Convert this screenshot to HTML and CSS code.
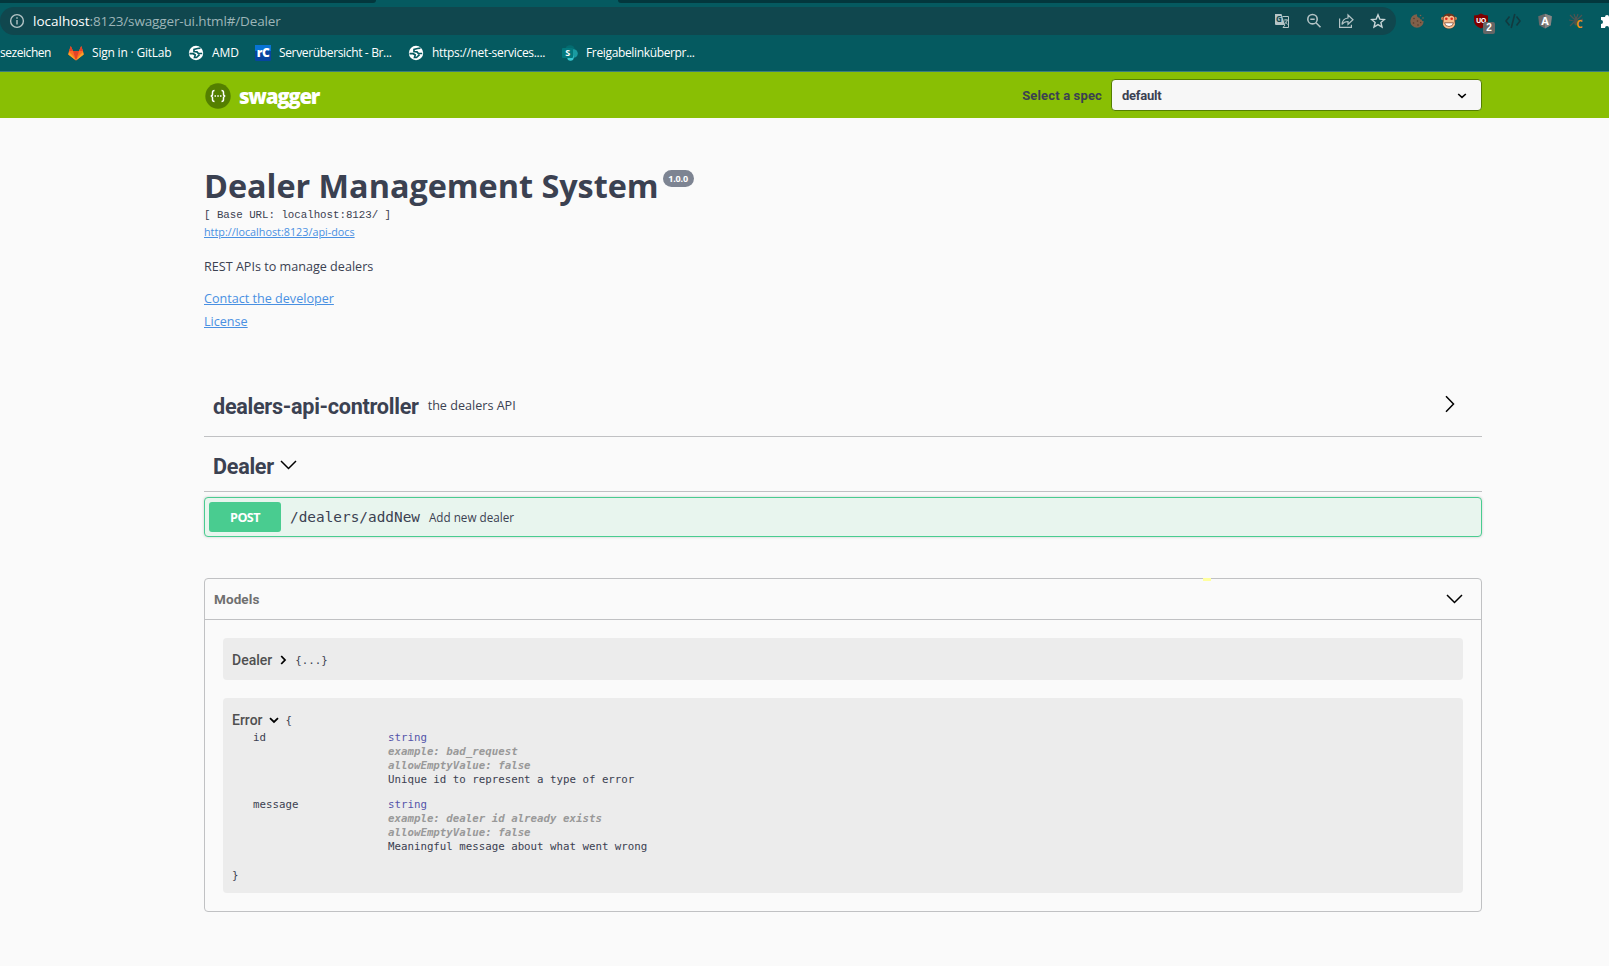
FILE: index.html
```html
<!DOCTYPE html>
<html lang="en">
<head>
    <meta charset="UTF-8">
    <meta name="viewport" content="width=device-width, initial-scale=1.0">
    <title>Swagger UI</title>
    <link rel="stylesheet" href="styles.css">
</head>
<body>
    <div class="browser">
        <div class="tabs">
            <div class="tab-left"></div>
            <div class="tab-right"></div>
        </div>
        <div class="toolbar">
            <div class="address-bar">
                <svg class="info-icon" width="16" height="16" viewBox="0 0 16 16" fill="none" stroke="#b4c4c6" stroke-width="1.4"><circle cx="8" cy="8" r="6.4"/><path d="M8 7v4.5M8 4.2v1.6"/></svg>
                <div class="url"><span class="host">localhost</span><span class="path">:8123/swagger-ui.html#/Dealer</span></div>
                <div class="address-icons">
                    <svg width="16" height="16" viewBox="0 0 16 16"><path d="M1 1h6.500l3.500 11H2q-1 0-1-1z" fill="#b6c6c8"/><path d="M8.500 3.500h6v11H9l2-2.500" fill="none" stroke="#b6c6c8"/><text x="5" y="9" class="g-letter">G</text><path d="M10 7h4M12 6v1M13.300 7q-.5 3-3 4M11 8.500l2.500 3" fill="none" stroke="#b6c6c8" stroke-width=".9"/></svg>
                    <svg width="16" height="16" viewBox="0 0 16 16" fill="none" stroke="#b4c4c6" stroke-width="1.6"><circle cx="6.500" cy="6.200" r="4.700"/><path d="M10 9.700l4.500 4.500M4.300 6.200h4.400"/></svg>
                    <svg width="16" height="16" viewBox="0 0 16 16" fill="none" stroke="#b4c4c6" stroke-width="1.2"><path d="M1.600 5.500v8.900h11.800v-2.600"/><path d="M4 11.500q.5-6 6-6.500V2l5 4.800-5 4.500V8.500q-4 0-6 3z"/></svg>
                    <svg width="16" height="16" viewBox="0 0 16 16" fill="none" stroke="#c8d5d7" stroke-width="1.4"><path d="M8 1.800l1.800 4.300 4.600.4-3.500 3 1.100 4.500-4-2.400L4 14l1.100-4.500-3.500-3 4.600-.4z"/></svg>
                </div>
            </div>
            <div class="extensions">
                <svg width="16" height="16" viewBox="0 0 16 16"><path d="M8 1.300A6.700 6.700 0 1 0 14.700 8q-2 .6-2-1.500-2.200.5-2-1.700Q7.500 4.500 8 1.300z" fill="#80604a"/><g fill="#553a29"><circle cx="5" cy="5.500" r=".8"/><circle cx="4.500" cy="10" r=".8"/><circle cx="8.500" cy="8" r=".8"/><circle cx="9" cy="12" r=".8"/><circle cx="11.700" cy="9.500" r=".7"/></g><circle cx="11.500" cy="2.500" r=".8" fill="#80604a"/><circle cx="14" cy="5" r=".8" fill="#80604a"/></svg>
                <svg width="16" height="16" viewBox="0 0 16 16"><circle cx="1.800" cy="5.500" r="1.800" fill="#c98355"/><circle cx="14.200" cy="5.500" r="1.800" fill="#c98355"/><rect x="1.700" y=".5" width="12.600" height="15" rx="5.500" fill="#70351d"/><path d="M2.600 4.500q2.700-3 5.400-.5 2.700-2.500 5.400.5V8l.6 3.500q-1.500 4-6 4t-6-4L2.600 8z" fill="#f6bd8d"/><circle cx="5.300" cy="5.700" r="1.300" fill="#e1251b"/><circle cx="10.700" cy="5.700" r="1.300" fill="#e1251b"/><path d="M3.500 9.800h9q-.5 3.700-4.500 3.700T3.500 9.800z" fill="#fff" stroke="#70351d" stroke-width=".7"/></svg>
                <div class="ublock">
                    <svg width="16" height="16" viewBox="0 0 16 16"><path d="M8 .5Q11 2.500 15 2.500v5Q15 13 8 15.500 1 13 1 7.500v-5Q5 2.500 8 .5z" fill="#800000"/><text x="8" y="9.500" class="ub-letter">UO</text></svg>
                    <span class="count">2</span>
                </div>
                <svg width="16" height="16" viewBox="0 0 16 16" fill="none" stroke="#123a3f" stroke-width="1.6"><path d="M4.500 3.500L1 8l3.500 4.500M11.500 3.500L15 8l-3.500 4.500M9.800 1L6.200 15"/></svg>
                <svg width="16" height="16" viewBox="0 0 16 16"><path d="M8 .8l6.800 2.400-1 9L8 15.500l-5.800-3.300-1-9z" fill="#696969"/><path d="M8 .8l6.800 2.400-1 9L8 15.500z" fill="#858585"/><text x="8" y="12" class="ng-letter">A</text></svg>
                <svg class="bug" width="16" height="16" viewBox="0 0 16 16"><ellipse cx="7" cy="8" rx="2" ry="4.500" fill="#4c5453"/><path d="M1 2l4 4M13 2L9 6M0 7l5 1M14 6L9 8M1 13l4-4M5 1l1 3M9 1L8 4" fill="none" stroke="#4c5453" stroke-width="1.2"/><text x="10.500" y="15" class="c-letter">C</text></svg>
                <svg class="puzzle" width="16" height="16" viewBox="0 0 16 16" fill="#fff"><path d="M1 4h4a2 2 0 1 1 4 0h4v11H9a2 2 0 0 0-4 0H1v-4a2 2 0 0 0 0-4z"/></svg>
            </div>
        </div>
        <div class="bookmarks">
            <div class="bookmark b-first"><span>sezeichen</span></div>
            <div class="bookmark b-gitlab">
                <svg width="16" height="16" viewBox="0 0 16 16"><path d="M8 15.500L.3 9.500 1 6l1.800-5L5 6h6l2.200-5L15 6l.7 3.500z" fill="#fc6d26"/><path d="M8 15.500L5 6h6z" fill="#e24329"/><path d="M2.800 1L5 6H1zM13.200 1L11 6h4z" fill="#e24329"/><path d="M8 15.500L.3 9.500 1 7l4 4zM8 15.500l7.700-6L15 7l-4 4z" fill="#fca326"/></svg>
                <span>Sign in · GitLab</span>
            </div>
            <div class="bookmark b-amd">
                <svg width="16" height="16" viewBox="0 0 16 16"><circle cx="8" cy="8" r="7.200" fill="#fff"/><path d="M1.500 8.700h3.700l2 1.200-.7 2.600h2l3-2.800M12.500 3.200L9.500 3.500 6 4.500v2l3 .3 1.200 1.500 4 .2" fill="none" stroke="#055a60" stroke-width="1.700"/></svg>
                <span>AMD</span>
            </div>
            <div class="bookmark b-server">
                <svg width="16" height="16" viewBox="0 0 16 16"><rect width="16" height="16" rx="1.500" fill="#0645a0"/><path d="M0 0h16v6H0z" fill="#0873d4"/><text x="8" y="12" class="rc-letter">rC</text></svg>
                <span>Serverübersicht - Br...</span>
            </div>
            <div class="bookmark b-net">
                <svg width="16" height="16" viewBox="0 0 16 16"><circle cx="8" cy="8" r="7.200" fill="#fff"/><path d="M1.500 8.700h3.700l2 1.200-.7 2.600h2l3-2.800M12.500 3.200L9.500 3.500 6 4.500v2l3 .3 1.200 1.500 4 .2" fill="none" stroke="#055a60" stroke-width="1.700"/></svg>
                <span>https://net-services....</span>
            </div>
            <div class="bookmark b-share">
                <svg width="16" height="16" viewBox="0 0 16 16"><circle cx="8" cy="5" r="4.800" fill="#036c70"/><circle cx="11.500" cy="8.500" r="4.300" fill="#1a9ba1"/><circle cx="8.500" cy="12.500" r="3.200" fill="#37c6d0"/><rect y="3" width="11" height="10" rx="1" fill="#03787c"/><text x="5.500" y="11.300" class="sp-letter">S</text></svg>
                <span>Freigabelinküberpr...</span>
            </div>
        </div>
    </div>

    <div class="topbar">
        <div class="wrapper">
            <div class="logo">
                <svg width="26" height="26" viewBox="0 0 26 26"><circle cx="13" cy="13" r="12.700" fill="#547f00"/><path d="M9.500 7.500q-2 0-2 2v1.500q0 2-1.800 2 1.800 0 1.800 2v1.500q0 2 2 2M16.500 7.500q2 0 2 2v1.500q0 2 1.800 2-1.800 0-1.800 2v1.500q0 2-2 2" fill="none" stroke="#fff" stroke-width="1.500"/><path d="M9.500 12.300H11v1.500H9.500zM12.300 12.300h1.500v1.500h-1.500zM15 12.300h1.500v1.500H15z" fill="#fff"/></svg>
                <span>swagger</span>
            </div>
            <div class="spec">
                <label>Select a spec</label>
                <div class="select">
                    <span>default</span>
                    <svg width="10" height="6" viewBox="0 0 10 6"><path d="M1.200 1L5 4.400 8.800 1" fill="none" stroke="#000" stroke-width="1.600"/></svg>
                </div>
            </div>
        </div>
    </div>

    <div class="wrapper main">
        <div class="info">
            <h1>Dealer Management System<span class="version">1.0.0</span></h1>
            <pre class="base-url">[ Base URL: localhost:8123/ ]</pre>
            <a class="docs-link" href="#">http://localhost:8123/api-docs</a>
            <p class="description">REST APIs to manage dealers</p>
            <a class="info-link" href="#">Contact the developer</a>
            <a class="info-link" href="#">License</a>
        </div>

        <div class="tag tag-controller">
            <h2>dealers-api-controller</h2>
            <small>the dealers API</small>
            <svg width="10" height="18" viewBox="0 0 10 18"><path d="M1 1.200L8.500 9 1 16.800" fill="none" stroke="#000" stroke-width="1.500"/></svg>
        </div>
        <div class="tag tag-dealer">
            <h2>Dealer</h2>
            <svg width="17" height="10" viewBox="0 0 17 10"><path d="M1 1l7.500 7.500L16 1" fill="none" stroke="#000" stroke-width="1.500"/></svg>
        </div>
        <div class="opblock">
            <span class="method">POST</span>
            <span class="op-path">/dealers/addNew</span>
            <span class="op-summary">Add new dealer</span>
        </div>

        <div class="models">
            <div class="models-header">
                <h4>Models</h4>
                <svg width="17" height="10" viewBox="0 0 17 10"><path d="M1 1l7.500 7.500L16 1" fill="none" stroke="#000" stroke-width="1.500"/></svg>
                <span class="mark"></span>
            </div>
            <div class="model-box">
                <div class="model-title">
                    <span class="name">Dealer</span>
                    <svg class="closed" width="7" height="10" viewBox="0 0 7 10"><path d="M1.200 1L5 5 1.200 9" fill="none" stroke="#000" stroke-width="1.800"/></svg>
                    <code>{...}</code>
                </div>
            </div>
            <div class="model-box model-error">
                <div class="model-title">
                    <span class="name">Error</span>
                    <svg class="opened" width="10" height="7" viewBox="0 0 10 7"><path d="M1 1.200L5 5l4-3.800" fill="none" stroke="#000" stroke-width="1.800"/></svg>
                    <code>{</code>
                </div>
                <div class="prop">
                    <div class="prop-name">id</div>
                    <div>
                        <div class="prop-type">string</div>
                        <div class="prop-attr">example: bad_request</div>
                        <div class="prop-attr">allowEmptyValue: false</div>
                        <div>Unique id to represent a type of error</div>
                    </div>
                </div>
                <div class="prop">
                    <div class="prop-name">message</div>
                    <div>
                        <div class="prop-type">string</div>
                        <div class="prop-attr">example: dealer id already exists</div>
                        <div class="prop-attr">allowEmptyValue: false</div>
                        <div>Meaningful message about what went wrong</div>
                    </div>
                </div>
                <div class="brace">}</div>
            </div>
        </div>
    </div>
</body>
</html>
```
FILE: styles.css
```css
* {
    box-sizing: border-box;
}
body {
    margin: 0;
    height: 966px;
    overflow: hidden;
    background: #fafafa;
    color: #3b4151;
    font-family: "Open Sans", sans-serif;
}
svg {
    display: block;
    flex-shrink: 0;
}
h1, h2, h4, p, pre {
    margin: 0;
}

/* browser */
.browser {
    height: 72px;
    background: #055a60;
    border-bottom: 1px solid #3a7f80;
    color: #fff;
    overflow: hidden;
}
.tabs {
    display: flex;
    justify-content: space-between;
    height: 3px;
}
.tab-left {
    width: 376px;
    background: #03373d;
    border-bottom-right-radius: 5px;
}
.tab-right {
    width: 991px;
    background: #03373d;
    border-bottom-left-radius: 5px;
}
.toolbar {
    display: flex;
    margin-top: 4px;
    height: 28px;
}
.address-bar {
    display: flex;
    align-items: center;
    flex-shrink: 0;
    width: 1396px;
    padding: 0 10px 0 9px;
    background: #10474e;
    border-radius: 14px;
}
.url {
    margin-left: 8px;
    padding-bottom: 1px;
    font-size: 13.5px;
    white-space: nowrap;
}
.url .path {
    color: #9db5b8;
    letter-spacing: -0.14px;
}
.address-icons {
    display: flex;
    gap: 16px;
    margin-left: auto;
}
.extensions {
    display: flex;
    align-items: center;
    gap: 16px;
    margin-left: 13px;
}
.bug {
    overflow: visible;
}
.puzzle {
    margin-left: -1px;
}
.ublock {
    position: relative;
}
.count {
    position: absolute;
    left: 10px;
    top: 9px;
    width: 12px;
    height: 12px;
    border-radius: 2px;
    background: #666;
    font: bold 10px/12px "Liberation Sans", sans-serif;
    text-align: center;
}
.g-letter, .ub-letter, .ng-letter, .c-letter, .rc-letter, .sp-letter {
    fill: #fff;
    font: bold 9px "Open Sans", sans-serif;
    text-anchor: middle;
}
.g-letter {
    fill: #10474e;
    font-size: 8px;
}
.ub-letter {
    font-size: 7px;
    letter-spacing: -0.5px;
}
.ng-letter {
    font-size: 11px;
}
.c-letter {
    fill: #f29111;
    font-size: 10px;
}
.rc-letter {
    font-size: 12px;
    font-weight: 800;
    letter-spacing: -0.5px;
}
.bookmarks {
    display: flex;
    align-items: center;
    height: 35px;
    font-size: 12px;
    letter-spacing: -0.1px;
}
.bookmark {
    display: flex;
    align-items: center;
    gap: 8px;
    white-space: nowrap;
}
.bookmark span {
    padding-bottom: 1px;
}
.b-first { width: 68px; letter-spacing: -0.45px; }
.b-gitlab { width: 120px; letter-spacing: -0.2px; }
.b-amd { width: 67px; }
.b-server { width: 153px; letter-spacing: -0.35px; }
.b-net { width: 154px; letter-spacing: -0.3px; }
.b-share { letter-spacing: -0.35px; }

/* swagger topbar */
.wrapper {
    width: 1278px;
    margin-left: 204px;
}
.topbar {
    height: 46px;
    background: #89bf04;
}
.topbar .wrapper {
    display: flex;
    align-items: center;
    justify-content: space-between;
    height: 46px;
}
.logo {
    display: flex;
    align-items: center;
    gap: 8px;
    padding-top: 2px;
    margin-left: 1px;
    color: #fff;
    font-size: 20.5px;
    font-weight: 800;
    letter-spacing: -1.3px;
}
.spec {
    display: flex;
    align-items: center;
    font-family: Roboto, sans-serif;
    font-size: 13px;
    font-weight: 700;
}
.spec label {
    letter-spacing: 0.15px;
}
.select {
    display: flex;
    align-items: center;
    justify-content: space-between;
    width: 371px;
    height: 32px;
    margin-left: 9px;
    padding: 0 14px 0 10px;
    border: 1px solid #547f00;
    border-radius: 4px;
    background: #f7f7f7;
    letter-spacing: -0.25px;
}
.select svg {
    margin-top: 1px;
}

/* api info */
.info {
    padding-top: 45px;
    height: 260px;
}
.info h1 {
    display: flex;
    height: 45px;
    font-size: 32.4px;
    line-height: 44px;
    letter-spacing: -0.03px;
    white-space: nowrap;
}
.version {
    width: 31px;
    height: 17px;
    margin: 7px 0 0 4px;
    border-radius: 9px;
    background: #7d8492;
    color: #fff;
    font-size: 9px;
    line-height: 17px;
    text-align: center;
    letter-spacing: -0.2px;
}
.base-url {
    height: 15px;
    font: 10.8px/15px "Liberation Mono", monospace;
    letter-spacing: -0.03px;
}
.info a {
    display: block;
    color: #4990e2;
}
.info .docs-link {
    font-size: 10.8px;
    line-height: 18px;
}
.description {
    margin: 17px 0 11px;
    font-size: 12.6px;
    line-height: 18px;
}
.info-link {
    font-size: 12.6px;
    line-height: 23px;
}
.tag {
    display: flex;
    align-items: center;
    padding: 0 27px 0 9px;
    border-bottom: 1px solid #c0c1c3;
}
.tag h2 {
    font-family: Roboto, sans-serif;
    font-size: 21.6px;
    letter-spacing: -0.28px;
}
.tag-controller {
    height: 59px;
}
.tag-controller h2 {
    margin-top: -2px;
}
.tag-controller small {
    margin: -4px 0 0 9px;
    font-size: 12.6px;
}
.tag-controller svg {
    margin: -6px 0 0 auto;
}
.tag-dealer {
    height: 55px;
    padding-top: 4px;
}
.tag-dealer svg {
    margin: -2px 0 0 6px;
}
.opblock {
    display: flex;
    align-items: center;
    height: 40px;
    margin-top: 5px;
    padding: 0 4px;
    border: 1px solid #49cc90;
    border-radius: 4px;
    background: #e8f5ee;
    box-shadow: 0 0 3px rgba(0, 0, 0, .19);
}
.method {
    width: 72px;
    height: 30px;
    border-radius: 3px;
    background: #49cc90;
    color: #fff;
    font-size: 12.6px;
    font-weight: 700;
    line-height: 31px;
    letter-spacing: -0.6px;
    text-align: center;
}
.op-path {
    margin-left: 9px;
    font: 14.4px "DejaVu Sans Mono", monospace;
}
.op-summary {
    margin-left: 9px;
    font-size: 11.7px;
}

/* models */
.models {
    height: 334px;
    margin-top: 41px;
    border: 1px solid #c0c1c3;
    border-radius: 4px;
}
.models-header {
    position: relative;
    display: flex;
    align-items: center;
    justify-content: space-between;
    height: 41px;
    padding: 0 18px 0 9px;
    border-bottom: 1px solid #c0c1c3;
}
.models-header h4 {
    color: #707070;
    font-family: Roboto, sans-serif;
    font-size: 13.5px;
    letter-spacing: 0.1px;
}
.mark {
    position: absolute;
    left: 998px;
    top: -1px;
    width: 8px;
    height: 3px;
    background: #ffffa0;
}
.model-box {
    height: 42px;
    margin: 18px 18px 0;
    padding: 12px 9px 0;
    border-radius: 4px;
    background: #ececec;
    font: 10.78px/14px "DejaVu Sans Mono", monospace;
}
.model-error {
    height: 195px;
}
.model-title {
    display: flex;
    align-items: center;
    height: 20px;
}
.model-title code {
    padding-top: 2px;
}
.model-title .name {
    color: #505050;
    font: 500 14px Roboto, sans-serif;
}
.model-title .closed {
    margin: 0 8px;
}
.model-title .opened {
    margin: 0 7px 0 6px;
}
.model-error .model-title {
    margin-bottom: 1px;
}
.prop {
    display: grid;
    grid-template-columns: 135px auto;
    height: 67px;
    padding-left: 21px;
}
.prop-type {
    color: #5555aa;
}
.prop-attr {
    color: #999;
    font-style: italic;
    font-weight: 700;
}
.brace {
    margin-top: 4px;
}
```
